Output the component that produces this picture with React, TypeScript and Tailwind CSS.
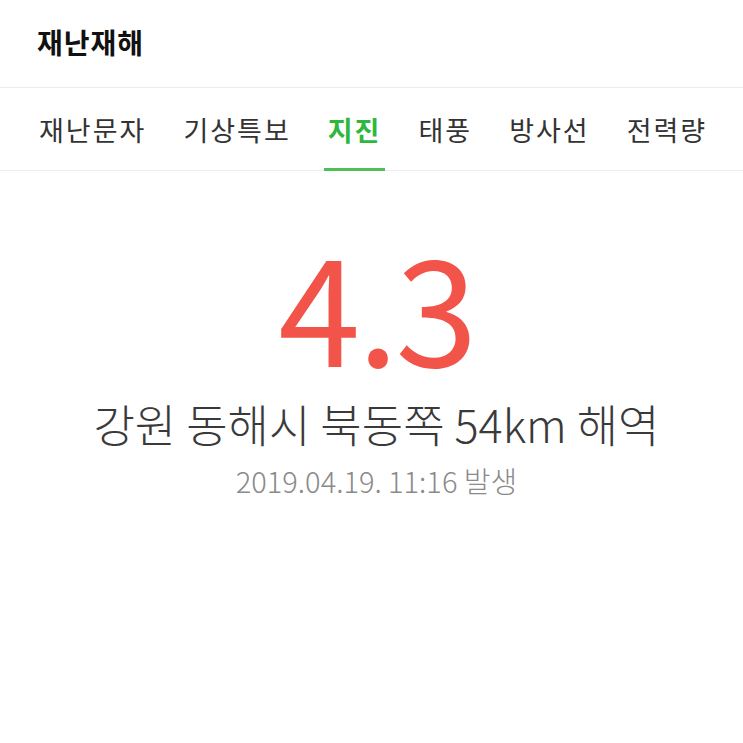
const tabs = ["재난문자", "기상특보", "지진", "태풍", "방사선", "전력량"];

export default function App() {
  const active = "지진";

  return (
    <div
      className="w-[743px] h-[743px] bg-white overflow-hidden"
      style={{ fontFamily: '"Noto Sans CJK KR", "Noto Sans", sans-serif' }}
    >
      <header className="h-[88px] flex items-center pl-[37px] border-b border-[#ececec]">
        <h1 className="text-[28px] font-bold text-[#111] leading-none tracking-[1px] -mt-[4px]">재난재해</h1>
      </header>

      <nav className="h-[83px] flex items-stretch pl-[35px] border-b border-[#ececec]">
        {tabs.map((t) => (
          <div
            key={t}
            className={
              t === active
                ? "relative flex items-center px-[4px] mr-[29px] text-[27px] tracking-[2px] font-bold text-[#2db83d]"
                : "relative flex items-center px-[4px] mr-[29px] text-[27px] tracking-[2px] text-[#333]"
            }
          >
            <span className="mt-[2px]">{t}</span>
            {t === active && (
              <span className="absolute left-0 right-0 -bottom-[1px] h-[3px] bg-[#4fbf57]" />
            )}
          </div>
        ))}
      </nav>

      <main className="flex flex-col items-center pt-[58px] pl-[10px]">
        <div className="text-[148px] leading-none text-[#f3544a] font-normal tracking-[-3px]">4.3</div>
        <p className="mt-[24px] text-[45px] leading-none text-[#3a3a3a] font-light">
          강원 동해시 북동쪽 54km 해역
        </p>
        <p className="mt-[20px] text-[29px] leading-none text-[#8a8a8a] font-light">
          2019.04.19. 11:16 발생
        </p>
      </main>
    </div>
  );
}
